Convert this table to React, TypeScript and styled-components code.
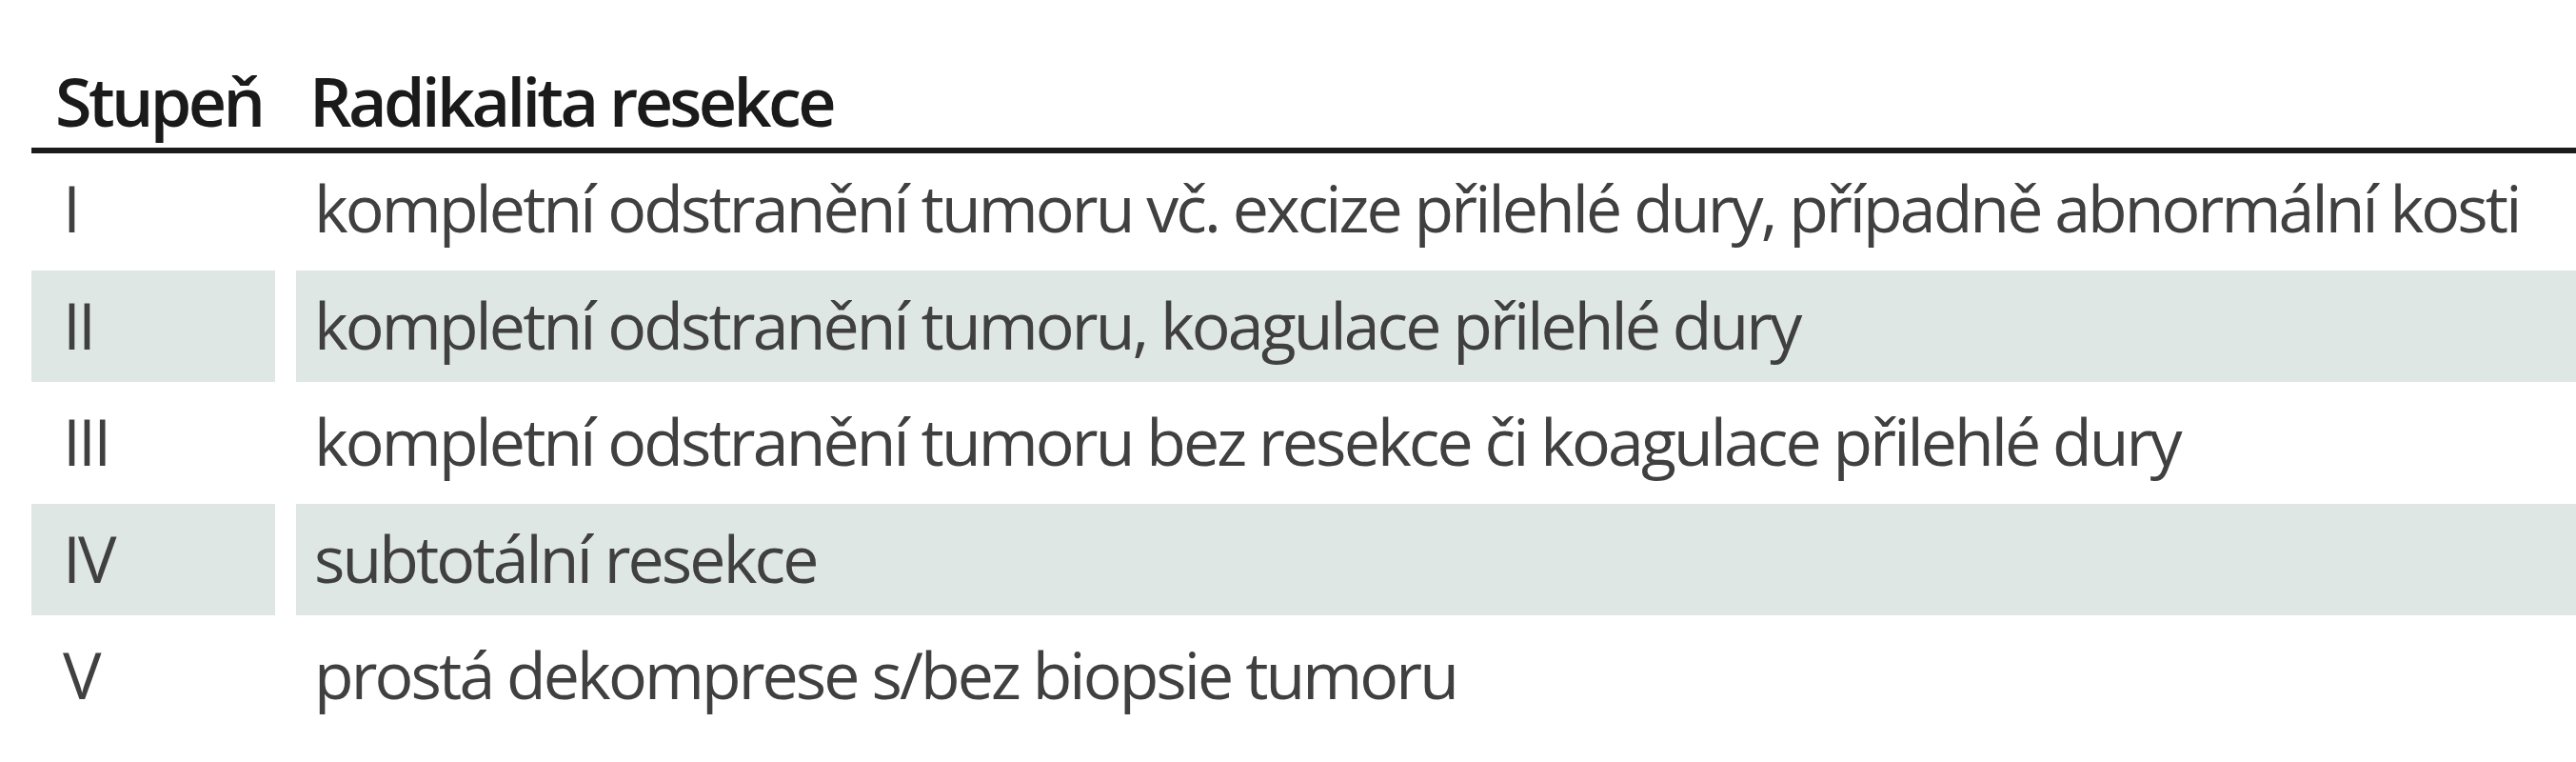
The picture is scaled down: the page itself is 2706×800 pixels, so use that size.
import React from 'react';
import styled, { createGlobalStyle } from 'styled-components';

const GlobalStyle = createGlobalStyle`
  body {
    margin: 0;
    background: #fff;
    font-family: "Open Sans", "Noto Sans", sans-serif;
  }
`;

// #region Styled
const StyledTable = styled.div`
  margin-left: 33px;
  display: flex;
  flex-direction: column;
`;

const StyledHeader = styled.div`
  display: grid;
  grid-template-columns: 256px 1fr;
  column-gap: 22px;
  padding-top: 64px;
  padding-bottom: 7px;
  border-bottom: 6px solid #1b1b1b;
`;

const StyledHeaderCell = styled.div<{ $indent: number }>`
  padding-left: ${(p) => p.$indent}px;
  font-size: 70px;
  font-weight: 600;
  letter-spacing: -3.6px;
  line-height: 84px;
  color: #1a1a1a;
  white-space: nowrap;
`;

const StyledBody = styled.div`
  display: flex;
  flex-direction: column;
  row-gap: 5.5px;
`;

const StyledRow = styled.div`
  display: grid;
  grid-template-columns: 256px 1fr;
  column-gap: 22px;
`;

const StyledCell = styled.div<{ $shaded: boolean; $indent: number }>`
  height: 117px;
  box-sizing: border-box;
  padding-left: ${(p) => p.$indent}px;
  padding-bottom: 4px;
  background: ${(p) => (p.$shaded ? '#dfe7e5' : 'transparent')};
  font-size: 68px;
  letter-spacing: -2.9px;
  line-height: 113px;
  color: #404040;
  white-space: nowrap;
`;
// #endregion

const rows = [
  {
    grade: 'I',
    text: 'kompletní odstranění tumoru vč. excize přilehlé dury, případně abnormální kosti',
  },
  { grade: 'II', text: 'kompletní odstranění tumoru, koagulace přilehlé dury' },
  {
    grade: 'III',
    text: 'kompletní odstranění tumoru bez resekce či koagulace přilehlé dury',
  },
  { grade: 'IV', text: 'subtotální resekce' },
  { grade: 'V', text: 'prostá dekomprese s/bez biopsie tumoru' },
];

export default function App() {
  return (
    <>
      <GlobalStyle />
      <StyledTable>
        <StyledHeader>
          <StyledHeaderCell $indent={25}>Stupeň</StyledHeaderCell>
          <StyledHeaderCell $indent={14}>Radikalita resekce</StyledHeaderCell>
        </StyledHeader>
        <StyledBody>
          {rows.map((row, i) => (
            <StyledRow key={row.grade}>
              <StyledCell $shaded={i % 2 === 1} $indent={33}>
                {row.grade}
              </StyledCell>
              <StyledCell $shaded={i % 2 === 1} $indent={19}>
                {row.text}
              </StyledCell>
            </StyledRow>
          ))}
        </StyledBody>
      </StyledTable>
    </>
  );
}
